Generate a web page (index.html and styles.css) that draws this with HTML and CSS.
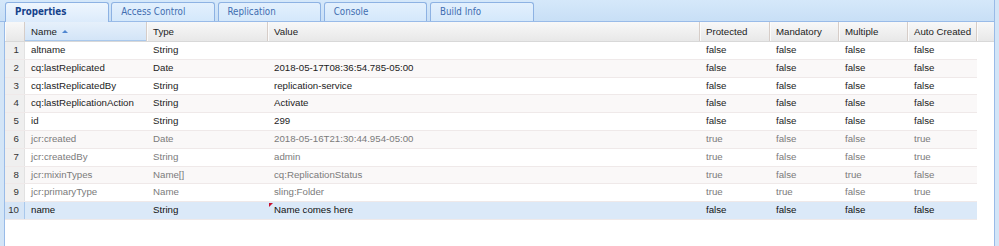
FILE: index.html
```html
<!DOCTYPE html>
<html>
<head>
<meta charset="utf-8">
<link rel="stylesheet" href="styles.css">
</head>
<body>
<div class="app">
  <div class="tabstrip">
    <div class="tab active">Properties</div>
    <div class="tab">Access Control</div>
    <div class="tab">Replication</div>
    <div class="tab">Console</div>
    <div class="tab">Build Info</div>
  </div>
  <div class="content">
    <div class="hrow">
      <div class="hd num"></div>
      <div class="hd sorted">Name<span class="sort-asc"></span></div>
      <div class="hd">Type</div>
      <div class="hd">Value</div>
      <div class="hd">Protected</div>
      <div class="hd">Mandatory</div>
      <div class="hd">Multiple</div>
      <div class="hd">Auto Created</div>
      <div class="hd filler"></div>
    </div>
    <div class="row"><div class="c num">1</div><div class="c">altname</div><div class="c">String</div><div class="c"></div><div class="c">false</div><div class="c">false</div><div class="c">false</div><div class="c">false</div></div>
    <div class="row alt"><div class="c num">2</div><div class="c">cq:lastReplicated</div><div class="c">Date</div><div class="c">2018-05-17T08:36:54.785-05:00</div><div class="c">false</div><div class="c">false</div><div class="c">false</div><div class="c">false</div></div>
    <div class="row"><div class="c num">3</div><div class="c">cq:lastReplicatedBy</div><div class="c">String</div><div class="c">replication-service</div><div class="c">false</div><div class="c">false</div><div class="c">false</div><div class="c">false</div></div>
    <div class="row alt"><div class="c num">4</div><div class="c">cq:lastReplicationAction</div><div class="c">String</div><div class="c">Activate</div><div class="c">false</div><div class="c">false</div><div class="c">false</div><div class="c">false</div></div>
    <div class="row"><div class="c num">5</div><div class="c">id</div><div class="c">String</div><div class="c">299</div><div class="c">false</div><div class="c">false</div><div class="c">false</div><div class="c">false</div></div>
    <div class="row alt protected"><div class="c num">6</div><div class="c">jcr:created</div><div class="c">Date</div><div class="c">2018-05-16T21:30:44.954-05:00</div><div class="c">true</div><div class="c">false</div><div class="c">false</div><div class="c">true</div></div>
    <div class="row protected"><div class="c num">7</div><div class="c">jcr:createdBy</div><div class="c">String</div><div class="c">admin</div><div class="c">true</div><div class="c">false</div><div class="c">false</div><div class="c">true</div></div>
    <div class="row alt protected"><div class="c num">8</div><div class="c">jcr:mixinTypes</div><div class="c">Name[]</div><div class="c">cq:ReplicationStatus</div><div class="c">true</div><div class="c">false</div><div class="c">true</div><div class="c">false</div></div>
    <div class="row protected"><div class="c num">9</div><div class="c">jcr:primaryType</div><div class="c">Name</div><div class="c">sling:Folder</div><div class="c">true</div><div class="c">true</div><div class="c">false</div><div class="c">true</div></div>
    <div class="row selected"><div class="c num">10</div><div class="c">name</div><div class="c">String</div><div class="c dirty">Name comes here</div><div class="c">false</div><div class="c">false</div><div class="c">false</div><div class="c">false</div></div>
  </div>
</div>
</body>
</html>
```

FILE: styles.css
```css
* { box-sizing: border-box; }
html, body { margin: 0; padding: 0; }
body {
  width: 999px;
  height: 246px;
  overflow: hidden;
  background: #d3e5f7;
  font-family: "Liberation Sans", Arial, sans-serif;
}
.app {
  height: 246px;
  display: flex;
  flex-direction: column;
}
.tabstrip {
  flex: none;
  height: 22px;
  margin-right: 4px;
  padding: 2px 0 0 5px;
  display: flex;
  align-items: flex-start;
  gap: 2.75px;
  background: linear-gradient(#d5e8fa, #c8dff6);
  border-bottom: 1px solid #99bbe8;
  border-right: 1px solid #99bbe8;
}
.tab {
  width: 103.5px;
  height: 19px;
  padding-left: 9px;
  border: 1px solid #8db2e3;
  border-bottom: none;
  border-radius: 3px 3px 0 0;
  background: linear-gradient(#e3f0fd, #d4e8fb);
  color: #3f6db0;
  font-family: "DejaVu Sans Condensed", "Liberation Sans", sans-serif;
  font-size: 9.7px;
  line-height: 17px;
  white-space: nowrap;
}
.tab.active {
  height: 20px;
  background: linear-gradient(#eef6fe, #dcebfb);
  color: #15428b;
  font-weight: bold;
}
.content {
  flex: 1;
  margin: 0 4px;
  background: #fff;
  border-left: 1px solid #99bbe8;
  border-right: 1px solid #99bbe8;
  font-size: 9.7px;
}
.hrow {
  display: grid;
  grid-template-columns: 20px 122px 121px 432px 70px 69px 69px 69px 1fr;
  height: 20px;
  background: linear-gradient(#f8f8f8, #e8e8e8);
  border-bottom: 1px solid #d8d8d8;
}
.hd {
  padding-left: 6px;
  line-height: 19px;
  color: #222;
  border-right: 1px solid #d6cdc8;
  box-shadow: inset 1px 0 #fbfbfb;
  white-space: nowrap;
}
.hd.filler { border-right: none; }
.hd.sorted {
  background: linear-gradient(#e6f0fb, #d2e4f7);
  box-shadow: inset 0 -1px #a9c8ec;
}
.sort-asc {
  display: inline-block;
  margin-left: 5px;
  vertical-align: 2px;
  border-left: 3.5px solid transparent;
  border-right: 3.5px solid transparent;
  border-bottom: 3.5px solid #4f86d0;
}
.row {
  display: grid;
  grid-template-columns: 20px 122px 121px 432px 70px 69px 69px 69px;
  width: 972px;
  height: 17.8px;
  border-bottom: 1px solid #efe9e9;
  color: #1c1c1c;
}
.row.alt { background: #faf8f8; }
.row.protected { color: #7b7b7b; }
.row.selected { background: #dbe9f8; color: #111; }
.c {
  padding-left: 6px;
  line-height: 16.8px;
  white-space: nowrap;
  overflow: hidden;
}
.c.num {
  padding: 0 5px 0 0;
  text-align: right;
  background: #efefef;
  border-right: 1px solid #e2e2e2;
  color: #333;
}
.row.selected .c.num {
  background: #d6e5f6;
  border-right: 1px solid #a9c8ec;
}
.c.dirty { position: relative; }
.c.dirty::before {
  content: "";
  position: absolute;
  left: 1px;
  top: 1px;
  border-top: 4px solid #c8102e;
  border-right: 4px solid transparent;
}
```
